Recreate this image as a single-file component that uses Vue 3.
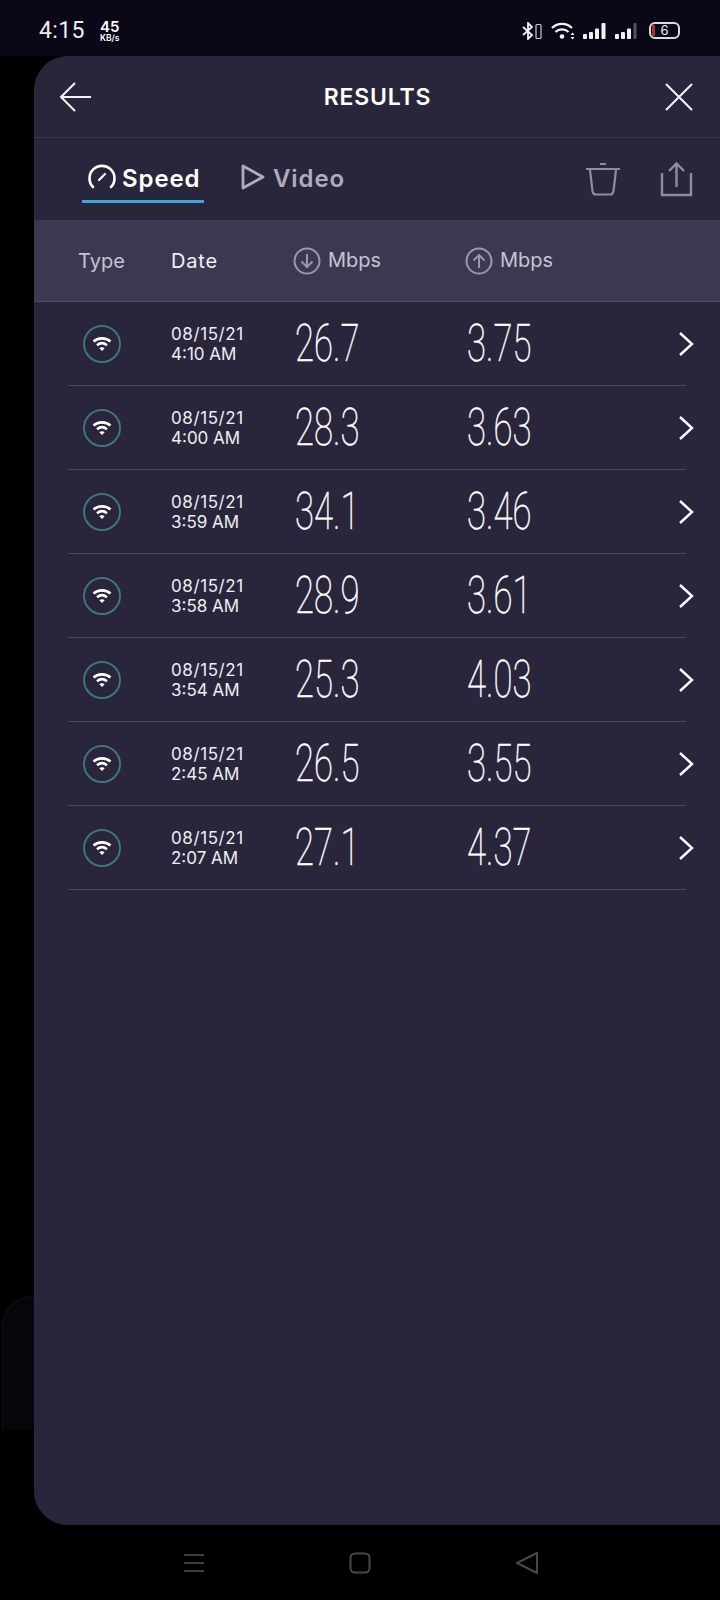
<script setup>
const results = [
  { date: '08/15/21', time: '4:10 AM', down: '26.7', up: '3.75' },
  { date: '08/15/21', time: '4:00 AM', down: '28.3', up: '3.63' },
  { date: '08/15/21', time: '3:59 AM', down: '34.1', up: '3.46' },
  { date: '08/15/21', time: '3:58 AM', down: '28.9', up: '3.61' },
  { date: '08/15/21', time: '3:54 AM', down: '25.3', up: '4.03' },
  { date: '08/15/21', time: '2:45 AM', down: '26.5', up: '3.55' },
  { date: '08/15/21', time: '2:07 AM', down: '27.1', up: '4.37' },
]
</script>

<template>
  <div class="page">
    <div class="status-bar">
      <span class="clock">4:15</span>
      <span class="net-speed"><b>45</b><i>KB/s</i></span>
      <div class="status-icons">
        <svg width="20" height="18" viewBox="0 0 20 18" fill="none" stroke="#f2f2f4" stroke-width="1.800">
          <path d="M1 5l9 8-4 4V1l4 4-9 8" />
          <rect x="14" y="2.500" width="5" height="14" rx="1" stroke-width="1.200" stroke="#c9c9cf" />
        </svg>
        <svg class="ic-wifi" width="24" height="18" viewBox="0 0 24 18" fill="none" stroke="#f2f2f4" stroke-width="2.200">
          <path d="M1 6C6.500.5 15.500.5 21 6M4.500 10c3.500-3.400 9.500-3.400 13 0" />
          <circle cx="11" cy="14.500" r="2.300" fill="#f2f2f4" stroke="none" />
          <path d="M21.500 10.500l-2 2.500h4zM21.500 17.500l-2-2.500h4z" fill="#f2f2f4" stroke="none" />
        </svg>
        <svg width="23" height="18" viewBox="0 0 23 18" fill="#f2f2f4">
          <rect x="0" y="12" width="4" height="5" rx="1" />
          <rect x="6" y="10" width="4" height="7" rx="1" />
          <rect x="12" y="6.500" width="4" height="10.500" rx="1" />
          <rect x="18.500" y="1" width="4" height="16" rx="1" />
        </svg>
        <svg width="22" height="18" viewBox="0 0 22 18" fill="#f2f2f4">
          <rect x="0" y="12" width="4" height="5" rx="1" />
          <rect x="6" y="10" width="4" height="7" rx="1" />
          <rect x="12" y="6.500" width="4" height="10.500" rx="1" />
          <rect x="18.500" y="1" width="3" height="16" rx="1" fill="#55535f" />
        </svg>
        <div class="battery"><span class="battery-low"></span>6</div>
      </div>
    </div>

    <div class="middle">
      <div class="ghost-card"></div>
      <div class="panel">
        <header class="panel-head">
          <svg width="32" height="30" viewBox="0 0 32 30" fill="none" stroke="#f4f4f6" stroke-width="2">
            <path d="M32 15H2M16 1L2 15l14 14" />
          </svg>
          <h1>RESULTS</h1>
          <svg width="30" height="30" viewBox="0 0 30 30" fill="none" stroke="#f4f4f6" stroke-width="2">
            <path d="M2 2l26 26M28 2L2 28" />
          </svg>
        </header>

        <div class="tabs">
          <div class="tab active">
            <svg width="28" height="26" viewBox="0 0 28 26" fill="none" stroke="#fff" stroke-width="2.600" stroke-linecap="round">
              <path d="M5 23A12.500 12.500 0 1 1 23 23" />
              <path d="M11 16l6-6" stroke-width="2.200" />
            </svg>
            <span>Speed</span>
          </div>
          <div class="tab">
            <svg width="24" height="26" viewBox="0 0 24 26" fill="none" stroke="#aeabbc" stroke-width="2.800" stroke-linejoin="round">
              <path d="M2 2v22l20-11z" />
            </svg>
            <span>Video</span>
          </div>
          <div class="tab-actions">
            <svg width="36" height="36" viewBox="0 0 36 36" fill="none" stroke="#8f8ca0" stroke-width="2.200">
              <path d="M1 8h34M15 3h6" />
              <path d="M5 9l2.500 21q.5 3.500 3.500 3.500h14q3 0 3.500-3.500L31 9" />
            </svg>
            <svg width="35" height="36" viewBox="0 0 35 36" fill="none" stroke="#8f8ca0" stroke-width="2.400">
              <path d="M3 12v22h29V12M17.500 26V3M10 10l7.500-7.500L25 10" />
            </svg>
          </div>
        </div>

        <div class="table-head">
          <span class="col-type">Type</span>
          <span class="col-date">Date</span>
          <div class="col-unit">
            <svg width="28" height="28" viewBox="0 0 28 28" fill="none" stroke="#9a97a9" stroke-width="2">
              <circle cx="14" cy="14" r="12.500" />
              <path d="M14 7v13M8.500 14.500L14 20l5.500-5.500" />
            </svg>
            <span>Mbps</span>
          </div>
          <div class="col-unit">
            <svg width="28" height="28" viewBox="0 0 28 28" fill="none" stroke="#9a97a9" stroke-width="2">
              <circle cx="14" cy="14" r="12.500" />
              <path d="M14 21V8M8.500 13.500L14 8l5.500 5.500" />
            </svg>
            <span>Mbps</span>
          </div>
        </div>

        <ul class="rows">
          <li v-for="r in results" :key="r.time" class="row">
            <span class="wifi-badge">
              <svg width="20" height="16" viewBox="0 0 20 16" fill="none" stroke="#fff" stroke-width="2.600">
                <path d="M1.500 5.500C6 1.300 14 1.300 18.500 5.500M5 9.200c3-2.400 7-2.400 10 0" />
                <path d="M7.300 12.300L10 15l2.700-2.700c-1.500-1.300-3.900-1.300-5.400 0z" fill="#fff" stroke="none" />
              </svg>
            </span>
            <div class="when">
              <span>{{ r.date }}</span>
              <span class="when-time">{{ r.time }}</span>
            </div>
            <div class="num"><span>{{ r.down }}</span></div>
            <div class="num"><span>{{ r.up }}</span></div>
            <svg class="chevron" width="18" height="26" viewBox="0 0 18 26" fill="none" stroke="#fff" stroke-width="2.400">
              <path d="M3 2l12 11L3 24" />
            </svg>
          </li>
        </ul>
      </div>
    </div>

    <nav class="nav-bar">
      <svg width="22" height="20" viewBox="0 0 22 20" stroke="#3f3f42" stroke-width="2">
        <path d="M1 2h20M1 10h20M1 18h20" />
      </svg>
      <svg width="22" height="22" viewBox="0 0 22 22" fill="none" stroke="#48484b" stroke-width="2">
        <rect x="1.500" y="1.500" width="19" height="19" rx="4.500" />
      </svg>
      <svg width="24" height="24" viewBox="0 0 24 24" fill="none" stroke="#48484b" stroke-width="2" stroke-linejoin="round">
        <path d="M22 2v20L2 12z" />
      </svg>
    </nav>
  </div>
</template>

<style>
html, body {
  margin: 0;
  background: #000;
}
</style>

<style scoped>
.page {
  width: 720px;
  height: 1600px;
  display: flex;
  flex-direction: column;
  background: #000;
  overflow: hidden;
  font-family: Inter, "Open Sans", sans-serif;
  color: #fff;
}

.status-bar {
  height: 56px;
  flex: none;
  display: flex;
  align-items: center;
  padding: 5px 40px 0 39px;
  box-sizing: border-box;
  background: #0a0716;
}
.clock {
  font-family: Roboto, sans-serif;
  font-size: 23px;
  letter-spacing: 0.4px;
  color: #ececf0;
}
.net-speed {
  display: flex;
  flex-direction: column;
  align-items: center;
  margin-left: 15px;
  line-height: 1;
}
.net-speed b {
  font-size: 15px;
  font-weight: 600;
}
.net-speed i {
  font-size: 8.500px;
  font-style: normal;
  font-weight: 600;
}
.status-icons {
  margin-left: auto;
  display: flex;
  align-items: center;
  gap: 9px;
}
.ic-wifi {
  margin-right: -1px;
}
.battery {
  position: relative;
  width: 31px;
  height: 17px;
  margin-left: 3px;
  box-sizing: border-box;
  border: 2px solid #dcdce0;
  border-radius: 6px;
  text-align: center;
  font-size: 13px;
  line-height: 13px;
  color: #f0f0f0;
}
.battery-low {
  position: absolute;
  left: 1px;
  top: 1px;
  bottom: 1px;
  width: 3px;
  background: #a8323a;
}

.middle {
  position: relative;
  height: 1469px;
  flex: none;
  padding-left: 34px;
  background: #000;
}
.ghost-card {
  position: absolute;
  left: 2px;
  top: 1240px;
  width: 60px;
  height: 132px;
  border-radius: 30px 0 0 0;
  background: #06050c;
  border: 1px solid #101015;
  border-bottom: none;
}
.panel {
  position: relative;
  height: 100%;
  display: flex;
  flex-direction: column;
  background: #29263b;
  border-radius: 34px 0 0 34px;
  overflow: hidden;
}

.panel-head {
  height: 82px;
  flex: none;
  box-sizing: border-box;
  display: flex;
  align-items: center;
  justify-content: space-between;
  padding: 0 26px 0 25px;
  border-bottom: 1px solid #3c394e;
}
.panel-head h1 {
  margin: 0;
  font-size: 23px;
  font-weight: 600;
  letter-spacing: 0.8px;
}

.tabs {
  height: 82px;
  flex: none;
  display: flex;
  align-items: center;
  padding: 0 26px 0 48px;
}
.tab {
  height: 48px;
  box-sizing: border-box;
  display: flex;
  align-items: center;
  gap: 8px;
  margin-right: 37px;
  padding-bottom: 2px;
  border-bottom: 3px solid transparent;
  font-size: 24px;
  font-weight: 600;
  letter-spacing: 0.9px;
  color: #aeabbc;
}
.tab span {
  margin-top: 3px;
}
.tab.active {
  width: 122px;
  padding-left: 6px;
  gap: 6px;
  color: #fff;
  border-bottom-color: #39a5dc;
}
.tab-actions {
  margin-left: auto;
  display: flex;
  align-items: center;
  gap: 38px;
}

.table-head {
  height: 82px;
  flex: none;
  box-sizing: border-box;
  display: grid;
  grid-template-columns: 93px 122px 172px 1fr;
  align-items: center;
  padding-left: 44px;
  background: #3d3852;
  border-bottom: 1px solid #4c4860;
  font-size: 20px;
  color: #c6c4d0;
}
.col-date {
  color: #f0f0f3;
  letter-spacing: 0.8px;
}
.col-unit {
  display: flex;
  align-items: center;
  gap: 7px;
}
.col-unit span {
  margin-top: -2px;
}

.rows {
  list-style: none;
  margin: 0;
  padding: 0 34px;
}
.row {
  height: 84px;
  box-sizing: border-box;
  display: grid;
  grid-template-columns: 103px 124px 172px 1fr auto;
  align-items: center;
  border-bottom: 1px solid #4a475c;
}
.wifi-badge {
  width: 38px;
  height: 38px;
  margin-left: 15px;
  box-sizing: border-box;
  display: flex;
  align-items: center;
  justify-content: center;
  border: 2px solid #3d7480;
  border-radius: 50%;
}
.when {
  display: flex;
  flex-direction: column;
  padding-top: 1px;
  font-size: 17px;
  line-height: 20px;
  letter-spacing: 0.6px;
  color: #eeeef2;
}
.when-time {
  letter-spacing: 0;
}
.num {
  font-family: Roboto, sans-serif;
  font-weight: 100;
  font-size: 51px;
  color: #fff;
  -webkit-text-stroke: 0.6px #fff;
}
.num span {
  display: inline-block;
  transform: scaleX(0.68);
  transform-origin: left center;
}
.chevron {
  margin-right: -9px;
}

.nav-bar {
  flex: 1;
  display: flex;
  align-items: center;
  justify-content: center;
  gap: 144px;
  padding-left: 2px;
  background: #000;
}
</style>
